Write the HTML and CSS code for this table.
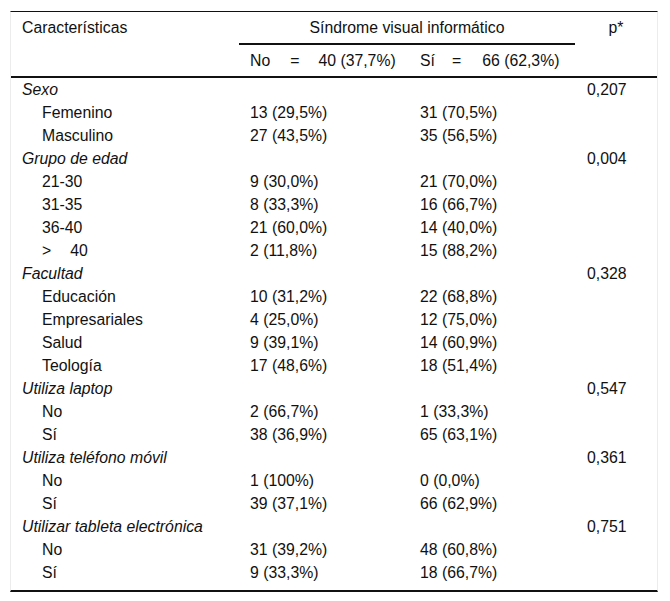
FILE: index.html
```html
<!DOCTYPE html>
<html lang="es">
<head>
<meta charset="utf-8">
<link rel="stylesheet" href="styles.css">
</head>
<body>
<div class="wrap">
<table class="tbl">
  <colgroup>
    <col class="c1"><col class="c2"><col class="c3"><col class="c4">
  </colgroup>
  <thead>
    <tr>
      <th class="h-first" rowspan="2">Características</th>
      <th class="h-group" colspan="2">Síndrome visual informático</th>
      <th class="h-p" rowspan="2">p*</th>
    </tr>
    <tr>
      <th class="h-sub">No<span class="eq">=</span>40 (37,7%)</th>
      <th class="h-sub">Sí<span class="eq eq2">=</span>66 (62,3%)</th>
    </tr>
  </thead>
  <tbody>
    <tr class="cat"><td><i>Sexo</i></td><td></td><td></td><td class="p">0,207</td></tr>
    <tr><td class="ind">Femenino</td><td>13 (29,5%)</td><td>31 (70,5%)</td><td></td></tr>
    <tr><td class="ind">Masculino</td><td>27 (43,5%)</td><td>35 (56,5%)</td><td></td></tr>
    <tr class="cat"><td><i>Grupo de edad</i></td><td></td><td></td><td class="p">0,004</td></tr>
    <tr><td class="ind">21-30</td><td>9 (30,0%)</td><td>21 (70,0%)</td><td></td></tr>
    <tr><td class="ind">31-35</td><td>8 (33,3%)</td><td>16 (66,7%)</td><td></td></tr>
    <tr><td class="ind">36-40</td><td>21 (60,0%)</td><td>14 (40,0%)</td><td></td></tr>
    <tr><td class="ind">&gt;<span class="gt">40</span></td><td>2 (11,8%)</td><td>15 (88,2%)</td><td></td></tr>
    <tr class="cat"><td><i>Facultad</i></td><td></td><td></td><td class="p">0,328</td></tr>
    <tr><td class="ind">Educación</td><td>10 (31,2%)</td><td>22 (68,8%)</td><td></td></tr>
    <tr><td class="ind">Empresariales</td><td>4 (25,0%)</td><td>12 (75,0%)</td><td></td></tr>
    <tr><td class="ind">Salud</td><td>9 (39,1%)</td><td>14 (60,9%)</td><td></td></tr>
    <tr><td class="ind">Teología</td><td>17 (48,6%)</td><td>18 (51,4%)</td><td></td></tr>
    <tr class="cat"><td><i>Utiliza laptop</i></td><td></td><td></td><td class="p">0,547</td></tr>
    <tr><td class="ind">No</td><td>2 (66,7%)</td><td>1 (33,3%)</td><td></td></tr>
    <tr><td class="ind">Sí</td><td>38 (36,9%)</td><td>65 (63,1%)</td><td></td></tr>
    <tr class="cat"><td><i>Utiliza teléfono móvil</i></td><td></td><td></td><td class="p">0,361</td></tr>
    <tr><td class="ind">No</td><td>1 (100%)</td><td>0 (0,0%)</td><td></td></tr>
    <tr><td class="ind">Sí</td><td>39 (37,1%)</td><td>66 (62,9%)</td><td></td></tr>
    <tr class="cat"><td><i>Utilizar tableta electrónica</i></td><td></td><td></td><td class="p">0,751</td></tr>
    <tr><td class="ind">No</td><td>31 (39,2%)</td><td>48 (60,8%)</td><td></td></tr>
    <tr class="last"><td class="ind">Sí</td><td>9 (33,3%)</td><td>18 (66,7%)</td><td></td></tr>
  </tbody>
</table>
</div>
</body>
</html>
```
FILE: styles.css
```css
html, body {
  margin: 0;
  padding: 0;
  background: #fff;
}
body {
  font-family: "Liberation Sans", Arial, sans-serif;
  font-size: 15.8px;
  color: #111;
}
.wrap {
  padding: 11px 0 0 10px;
}
.tbl {
  width: 648px;
  border-collapse: separate;
  border-spacing: 0;
  table-layout: fixed;
  border-top: 1px solid #111;
  border-bottom: 2px solid #111;
  border-left: 1px solid #ececec;
  border-right: 1px solid #ececec;
}
.c1 { width: 228px; }
.c2 { width: 170px; }
.c3 { width: 166px; }
.c4 { width: 82px; }
th {
  font-weight: normal;
  text-align: left;
  line-height: 17px;
}
.h-first, .h-p {
  vertical-align: top;
  padding: 7px 0 0 11px;
  border-bottom: 2px solid #111;
}
.h-p {
  text-align: center;
  padding-left: 0;
}
.h-group {
  text-align: center;
  padding: 7px 0 7px 0;
  border-bottom: 2px solid #111;
}
.h-sub {
  padding: 7px 0 7px 11px;
  border-bottom: 2px solid #111;
  white-space: nowrap;
}
.eq {
  margin: 0 19px 0 20px;
}
.eq2 {
  margin-left: 17px;
  margin-right: 21px;
}
td {
  line-height: 23px;
  height: 23px;
  padding: 0 0 0 11px;
  white-space: nowrap;
}
td.ind {
  padding-left: 31px;
}
td.p {
  padding-left: 12px;
}
.gt {
  margin-left: 19px;
}
.last td {
  height: 29px;
  vertical-align: top;
}
```
